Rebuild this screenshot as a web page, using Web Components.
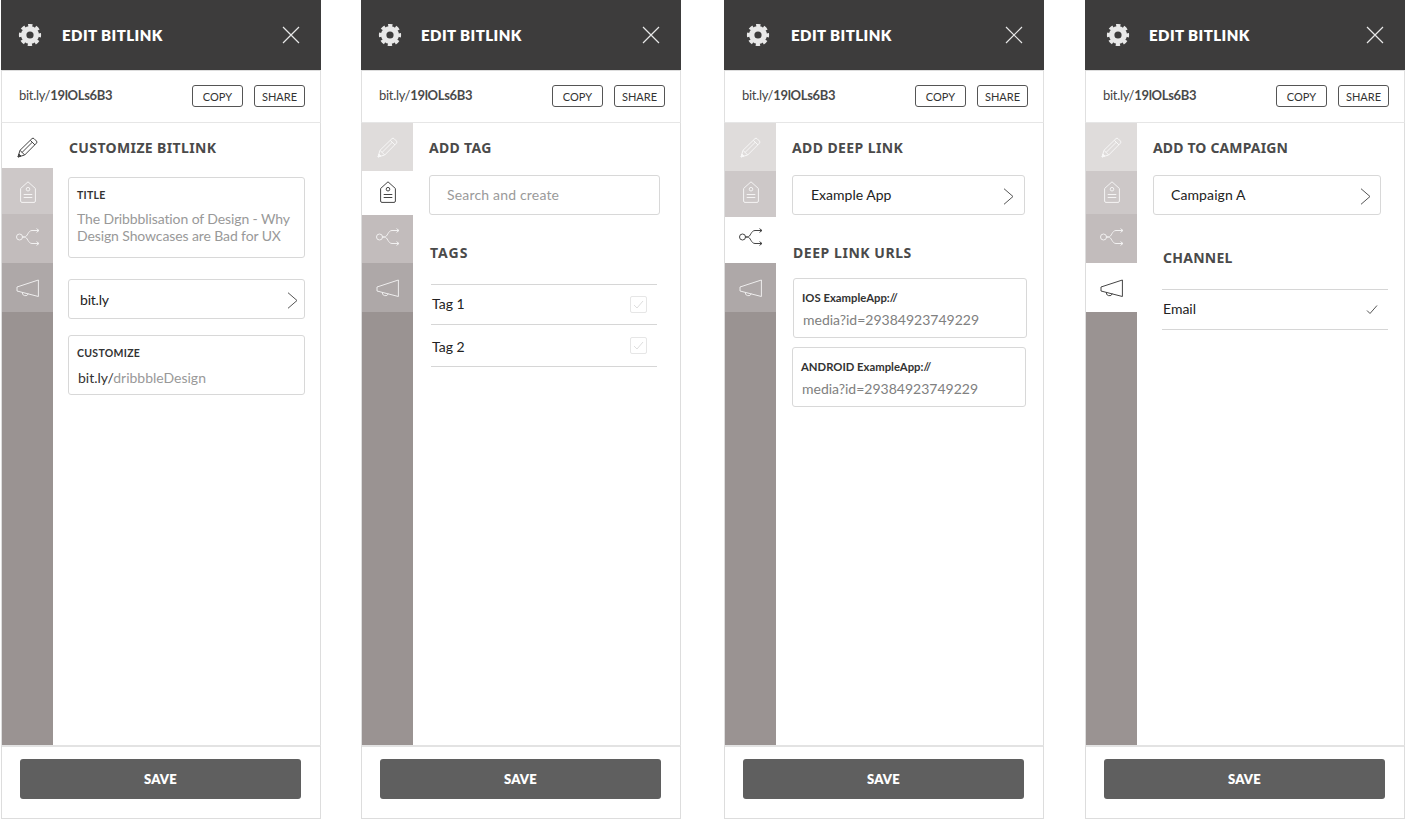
<!DOCTYPE html>
<html>
<head>
<meta charset="utf-8">
<title>Edit Bitlink</title>
<style>
    html, body { margin: 0; background: #fff; }
    body { width: 1408px; height: 821px; overflow: hidden; font-family: "Lato", "Liberation Sans", sans-serif; }
    .board { display: flex; padding-left: 1px; }
</style>
</head>
<body>
<div class="board">
    <bit-panel active="0" heights="45,46,49,49" style="--gear-x:17px;--title-gap:20px">
        <sec-title style="letter-spacing:.37px">CUSTOMIZE BITLINK</sec-title>
        <field-box label="TITLE" style="margin:21px 0 0 15px;width:237px;height:81px">
            <span style="letter-spacing:-.11px">The Dribbblisation of Design - Why<br>Design Showcases are Bad for UX</span>
        </field-box>
        <pick-box style="margin:21px 0 0 15px;width:237px;letter-spacing:-.2px" pad="11" end="6">bit.ly</pick-box>
        <field-box label="CUSTOMIZE" style="margin:16px 0 0 15px;width:237px;height:60px" tight="1">
            <span style="color:#333">bit.ly/</span>dribbbleDesign
        </field-box>
    </bit-panel>

    <bit-panel active="1" heights="48,44,48,49" style="margin-left:40px;--gear-x:17px;--title-gap:19px">
        <sec-title style="letter-spacing:.3px">ADD TAG</sec-title>
        <pick-box style="margin:19px 0 0 16px;width:231px;--lift:-2px;letter-spacing:.18px" pad="17" plain="1"><span style="color:#9a9a9a">Search and create</span></pick-box>
        <sec-title style="margin:29px 0 0 17px;letter-spacing:1px">TAGS</sec-title>
        <tag-list style="margin:23px 0 0 18px;width:226px">
            <list-row kind="box" style="--lift:-2px">Tag 1</list-row>
            <list-row kind="box" style="height:42px;--lift:2px">Tag 2</list-row>
        </tag-list>
    </bit-panel>

    <bit-panel active="2" heights="48,46,46,49" style="margin-left:43px;--gear-x:22px;--title-gap:21px">
        <sec-title style="letter-spacing:.4px">ADD DEEP LINK</sec-title>
        <pick-box style="margin:19px 0 0 16px;width:233px;--lift:-2px" pad="18" end="10">Example App</pick-box>
        <sec-title style="margin:29px 0 0 17px">DEEP LINK URLS</sec-title>
        <field-box label="IOS ExampleApp://" small="1" style="margin:17px 0 0 17px;width:234px;height:60px">media?id=29384923749229</field-box>
        <field-box label="ANDROID ExampleApp://" small="1" style="margin:9px 0 0 16px;width:234px;height:60px">media?id=29384923749229</field-box>
    </bit-panel>

    <bit-panel active="3" heights="48,43,49,49" style="margin-left:41px;--gear-x:21px;--title-gap:19px">
        <sec-title style="letter-spacing:.15px">ADD TO CAMPAIGN</sec-title>
        <pick-box style="margin:19px 0 0 16px;width:228px;--lift:-2px;letter-spacing:.1px" pad="17" end="9">Campaign A</pick-box>
        <sec-title style="margin:34px 0 0 26px;letter-spacing:.25px">CHANNEL</sec-title>
        <tag-list style="margin:23px 0 0 25px;width:226px">
            <list-row kind="tick" style="--lift:-2px">Email</list-row>
        </tag-list>
    </bit-panel>
</div>

<script>
    ((customElements, document) => {
        'use strict';

        const icons = {
            pencil: '<svg width="21" height="21" viewBox="0 0 21 21" fill="none" stroke="currentColor" stroke-width="1"><path d="M1 20l2-6.700L15 1.600q1-.9 2 0l2.500 2.500q.9 1 0 2L7.700 18z"/><path d="M3 13.300L7.700 18M13.300 3.300l4.700 4.700M5 15.500L15.500 5"/><path d="M1 20l.9-3 2.100 2.100z" fill="currentColor"/></svg>',
            tag: '<svg width="16" height="22" viewBox="0 0 16 22" fill="none" stroke="currentColor" stroke-width="1"><path d="M.6 7.500L8 .8l7.400 6.700V20q0 1.400-1.400 1.400H2Q.6 21.400.6 20z"/><circle cx="8" cy="8.200" r="1.800"/><path d="M3.700 13.500h8.600M3.700 16.500h8.600"/></svg>',
            branch: '<svg width="24" height="18" viewBox="0 0 24 18" fill="none" stroke="currentColor" stroke-width="1"><circle cx="3.500" cy="9" r="3"/><path d="M6.500 9h2.200C11.500 9 12 2.500 16 2.500h7M6.500 9h2.200c2.800 0 3.300 6.500 7.300 6.500h7"/><path d="M20.500.6l2.500 1.900-2.500 1.900M20.500 13.600l2.500 1.900-2.500 1.900"/></svg>',
            horn: '<svg width="23" height="19" viewBox="0 0 23 19" fill="none" stroke="currentColor" stroke-width="1"><path d="M1 8L22.400 1v16.500L1 12z"/><path d="M6.300 13.300a3.100 3.100 0 0 0 6 1.400"/></svg>'
        };
        const tabColors = ['#dfdcdb', '#cdc8c8', '#c2bcbc', '#aea8a8'];
        const tabNames = ['pencil', 'tag', 'branch', 'horn'];
        // where each icon sits below the top of the rail, whatever the tab heights are
        const iconTops = [14, 58, 105, 156];

        const chevron = '<svg width="11" height="17" viewBox="0 0 11 17" fill="none" stroke="#555" stroke-width="1"><path d="M1 .7l9 7.800-9 7.800"/></svg>';

        const panelTemplate = document.createElement('template');
        panelTemplate.innerHTML = `
            <style>
                :host { display: flex; flex-direction: column; width: 320px; height: 819px; flex: none; }
                .head { display: flex; align-items: center; height: 70px; background: #3d3c3c; color: #fff; padding: 0 21px 0 var(--gear-x); }
                .head h1 { margin: 0 0 0 var(--title-gap); flex: 1; font: 800 15px "Lato", sans-serif; letter-spacing: .45px; }
                .gear { display: block; }
                .bar { display: flex; align-items: center; height: 53px; box-sizing: border-box; padding: 0 15px 0 17px; border: 1px solid #e0e0e0; border-top: 1px solid #ddd; border-bottom: 1px solid #e6e6e6; color: #444; font-size: 13px; }
                .url { flex: 1; margin-top: -4px; letter-spacing: -.3px; }
                .url b { font-weight: 700; color: #4a4a4a; }
                .btn { width: 51px; height: 22px; box-sizing: border-box; margin: -1px 0 0 11px; border: 1px solid #555; border-radius: 3px; font-size: 11px; line-height: 21px; text-align: center; color: #333; }
                .main { flex: 1; display: flex; border: 1px solid #ddd; border-width: 0 1px; min-height: 0; }
                .rail { width: 51px; display: flex; flex-direction: column; background: #9a9392; flex: none; }
                .tab { display: flex; justify-content: center; color: #fff; box-sizing: border-box; }
                .tab svg { opacity: .8; }
                .tab.on { background: #fff; color: #444; }
                .tab.on svg { opacity: 1; }
                .content { flex: 1; min-width: 0; display: flex; flex-direction: column; padding-top: 16px; }
                .foot { height: 74px; box-sizing: border-box; padding: 12px 19px 0 18px; border: 1px solid #ddd; border-top: 2px solid #e3e3e3; }
                .save { height: 40px; border-radius: 3px; background: #5f5f5f; color: #fff; font: 800 13px/41px "Lato", sans-serif; text-align: center; letter-spacing: .2px; }
            </style>
            <div class="head">
                <svg class="gear" width="24" height="24" viewBox="0 0 24 24" fill="none" stroke="#e8e8e8">
                    <circle cx="12" cy="12" r="6.300" stroke-width="5.400"/>
                    <circle cx="12" cy="12" r="9.300" stroke-width="3.600" stroke-dasharray="4.100 3.205" stroke-dashoffset="2.050"/>
                </svg>
                <h1>EDIT BITLINK</h1>
                <svg width="18" height="18" viewBox="0 0 18 18" stroke="#e8e8e8" stroke-width="1.200"><path d="M1 1l16 16M17 1L1 17"/></svg>
            </div>
            <div class="bar">
                <span class="url">bit.ly/<b>19lOLs6B3</b></span>
                <span class="btn">COPY</span>
                <span class="btn">SHARE</span>
            </div>
            <div class="main">
                <div class="rail"></div>
                <div class="content"><slot></slot></div>
            </div>
            <div class="foot"><div class="save">SAVE</div></div>
        `;

        class BitPanelElement extends HTMLElement {
            constructor() {
                super();
                this.attachShadow({mode: 'open'}).appendChild(document.importNode(panelTemplate.content, true));
            }
            connectedCallback() {
                const rail = this.shadowRoot.querySelector('.rail');
                const active = Number(this.getAttribute('active'));
                const heights = this.getAttribute('heights').split(',').map(Number);
                let top = 0;
                rail.innerHTML = '';
                tabNames.forEach((name, i) => {
                    const tab = document.createElement('div');
                    tab.className = i === active ? 'tab on' : 'tab';
                    tab.style.height = heights[i] + 'px';
                    tab.style.paddingTop = (iconTops[i] - top) + 'px';
                    if (i !== active) tab.style.background = tabColors[i];
                    tab.innerHTML = icons[name];
                    rail.appendChild(tab);
                    top += heights[i];
                });
            }
        }
        customElements.define('bit-panel', BitPanelElement);

        class SecTitleElement extends HTMLElement {
            constructor() {
                super();
                this.attachShadow({mode: 'open'}).innerHTML = `
                    <style>
                        :host { display: block; margin-left: 16px; color: #4a4a4a; font: 700 14px/17px "Noto Sans", "Open Sans", sans-serif; letter-spacing: .55px; }
                    </style>
                    <slot></slot>`;
            }
        }
        customElements.define('sec-title', SecTitleElement);

        class FieldBoxElement extends HTMLElement {
            constructor() {
                super();
                const small = this.hasAttribute('small');
                const tight = this.hasAttribute('tight');
                this.attachShadow({mode: 'open'}).innerHTML = `
                    <style>
                        :host { display: block; box-sizing: border-box; border: 1px solid #d8d8d8; border-radius: 3px; padding: ${small ? 12 : 11}px 8px 0; color: #999; font-size: 14px; line-height: ${tight || small ? 16 : 17}px; }
                        .label { font: 700 ${small ? 11.3 : 10.5}px/13px "Lato", sans-serif; color: #333; margin-bottom: ${tight ? 10 : 8}px; letter-spacing: ${small ? 0 : .3}px; }
                        .text { display: block; color: ${small ? '#808080' : '#999'}; margin-left: ${tight || small ? 1 : 0}px; }
                    </style>
                    <div class="label">${this.getAttribute('label')}</div>
                    <span class="text"><slot></slot></span>`;
            }
        }
        customElements.define('field-box', FieldBoxElement);

        class PickBoxElement extends HTMLElement {
            constructor() {
                super();
                const plain = this.hasAttribute('plain');
                this.attachShadow({mode: 'open'}).innerHTML = `
                    <style>
                        :host { display: flex; align-items: center; box-sizing: border-box; height: 40px; border: 1px solid #d8d8d8; border-radius: 3px; padding: 0 ${this.getAttribute('end') || 9}px 0 ${this.getAttribute('pad')}px; color: #222; font-size: 14px; }
                        .label { flex: 1; margin-top: var(--lift, 0); }
                        svg { display: block; margin-top: 2px; }
                    </style>
                    <span class="label"><slot></slot></span>
                    ${plain ? '' : chevron}`;
            }
        }
        customElements.define('pick-box', PickBoxElement);

        class TagListElement extends HTMLElement {
            constructor() {
                super();
                this.attachShadow({mode: 'open'}).innerHTML = `
                    <style>
                        :host { display: block; border-top: 1px solid #d6d6d6; }
                    </style>
                    <slot></slot>`;
            }
        }
        customElements.define('tag-list', TagListElement);

        class ListRowElement extends HTMLElement {
            constructor() {
                super();
                const box = this.getAttribute('kind') === 'box';
                this.attachShadow({mode: 'open'}).innerHTML = `
                    <style>
                        :host { display: flex; align-items: center; box-sizing: border-box; height: 40px; border-bottom: 1px solid #d6d6d6; padding: 0 10px 0 1px; color: #222; font-size: 14px; }
                        .label { flex: 1; margin-top: var(--lift, 0); }
                        .box { display: flex; align-items: center; justify-content: center; width: 17px; height: 17px; box-sizing: border-box; border: 1px solid #e6e6e6; border-radius: 2px; }
                        svg { display: block; }
                    </style>
                    <span class="label"><slot></slot></span>
                    ${box
                        ? '<span class="box"><svg width="11" height="9" viewBox="0 0 11 9" fill="none" stroke="#dedede"><path d="M1 5l3 3 6-7"/></svg></span>'
                        : '<svg width="12" height="10" viewBox="0 0 12 10" fill="none" stroke="#555"><path d="M1 5.500l3 3 7-8"/></svg>'}`;
            }
        }
        customElements.define('list-row', ListRowElement);
    })(window.customElements, document);
</script>
</body>
</html>
